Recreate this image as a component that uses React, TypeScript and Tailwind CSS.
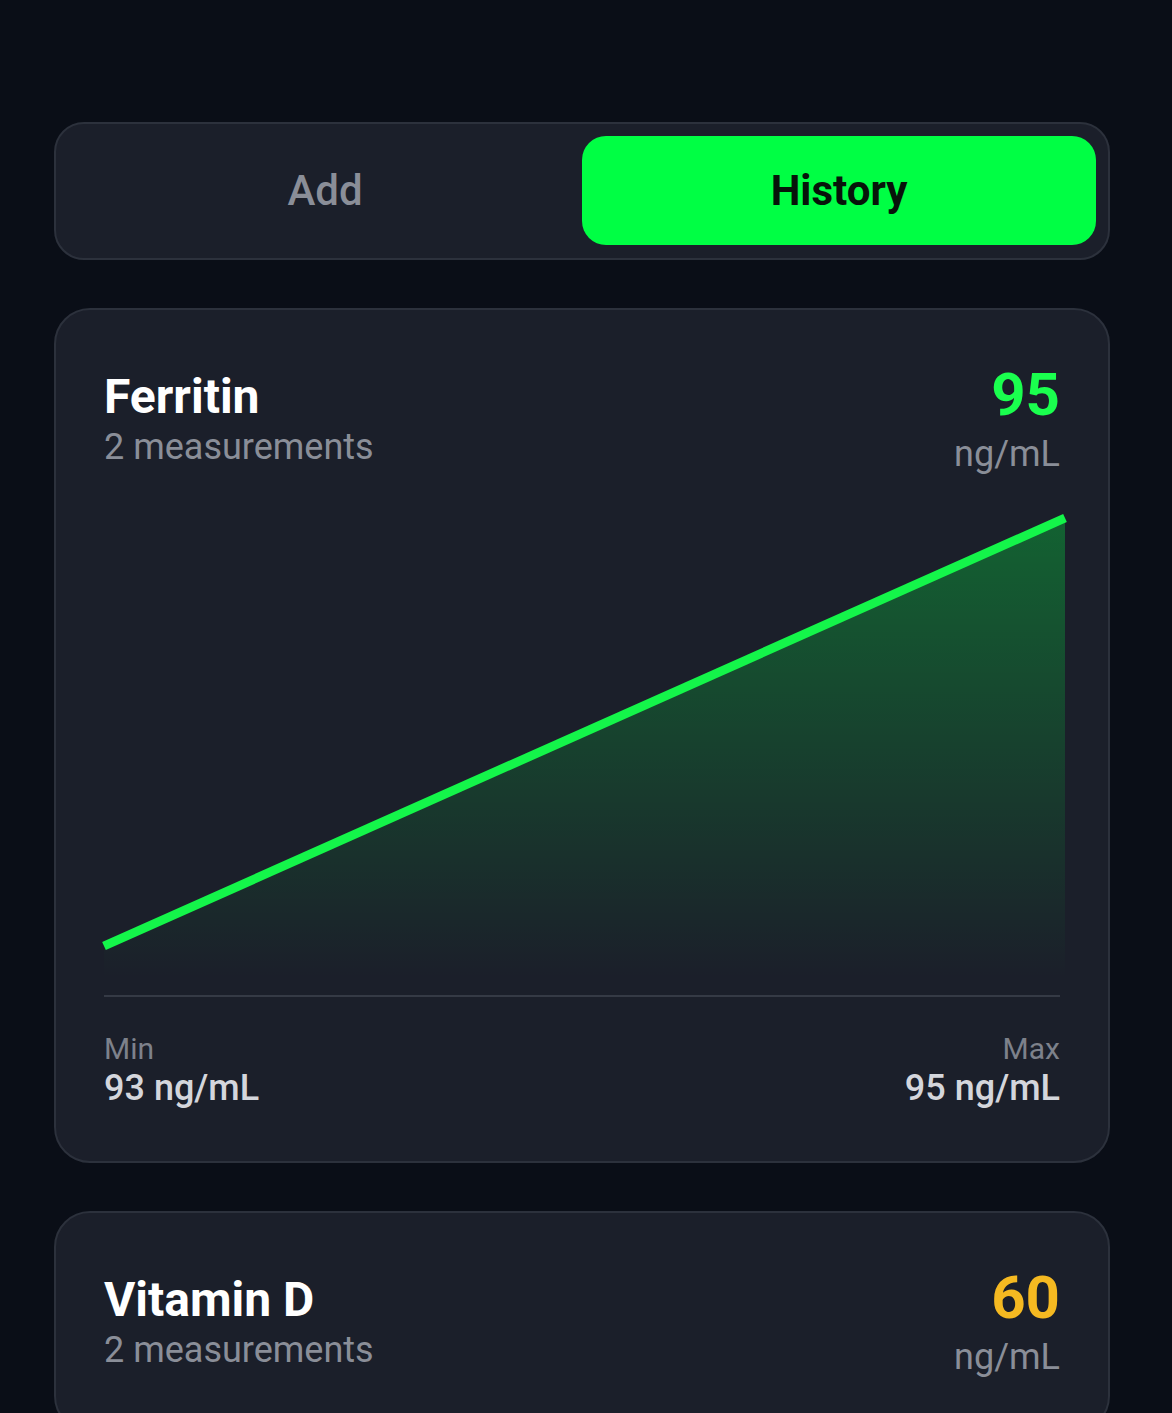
import React from "react"

type Marker = {
  name: string
  count: number
  value: number
  unit: string
  color: string
  min: number
  max: number
}

const markers: Marker[] = [
  { name: "Ferritin", count: 2, value: 95, unit: "ng/mL", color: "text-[#1aff4e]", min: 93, max: 95 },
  { name: "Vitamin D", count: 2, value: 60, unit: "ng/mL", color: "text-[#f5b921]", min: 58, max: 60 },
]

const TrendChart = () => (
  <svg width="962" height="487" viewBox="0 0 962 487" className="block overflow-visible">
    <defs>
      <linearGradient id="fill" x1="0" y1="0" x2="0" y2="1">
        <stop offset="0%" stopColor="#00ff44" stopOpacity="0.3" />
        <stop offset="100%" stopColor="#00ff44" stopOpacity="0" />
      </linearGradient>
    </defs>
    <path d="M0 438 L961 10 L961 470 L0 470 Z" fill="url(#fill)" />
    <path d="M0 438 L961 10" stroke="#14f54a" strokeWidth="9" fill="none" />
  </svg>
)

const MarkerCard = ({ m, chart }: { m: Marker; chart: boolean }) => (
  <div className="rounded-[36px] border-2 border-[#2c313c] bg-[#1b1f2a] px-12 pt-[59px] pb-[51px]">
    <div className="flex items-start justify-between">
      <div>
        <h2 className="text-[48px] font-bold leading-[56px] text-white">{m.name}</h2>
        <p className="text-[36px] leading-[44px] text-[#8a8e98]">{m.count} measurements</p>
      </div>
      <div className="flex flex-col items-end">
        <span className={`text-[60px] font-bold leading-[52px] ${m.color}`}>{m.value}</span>
        <span className="mt-[11px] text-[36px] leading-[44px] text-[#8a8e98]">{m.unit}</span>
      </div>
    </div>
    {chart && (
      <>
        <div className="mt-[32px]">
          <TrendChart />
        </div>
        <div className="h-[2px] bg-[#353a45]" />
        <div className="mt-[35px] flex justify-between">
          <div>
            <p className="text-[30px] leading-[34px] text-[#7d818b]">Min</p>
            <p className="text-[36px] font-medium leading-[44px] text-[#d4d6dc]">
              {m.min} {m.unit}
            </p>
          </div>
          <div className="text-right">
            <p className="text-[30px] leading-[34px] text-[#7d818b]">Max</p>
            <p className="text-[36px] font-medium leading-[44px] text-[#d4d6dc]">
              {m.max} {m.unit}
            </p>
          </div>
        </div>
      </>
    )}
  </div>
)

export default function App() {
  return (
    <div
      className="min-h-[1413px] bg-[#0a0e17] pl-[54px] pr-[62px] pt-[122px]"
      style={{ fontFamily: "Roboto, 'Noto Sans', sans-serif" }}
    >
      <div className="flex rounded-[30px] border-2 border-[#2c313c] bg-[#1b1f2a] px-3 pt-3 pb-[13px]">
        <button className="flex h-[109px] flex-1 items-center justify-center text-[42px] font-medium text-[#8a8e98]">
          Add
        </button>
        <button className="flex h-[109px] flex-1 items-center justify-center rounded-[24px] bg-[#00ff44] text-[42px] font-bold text-[#07140a]">
          History
        </button>
      </div>
      <div className="mt-[48px] flex flex-col gap-[48px]">
        {markers.map((m, i) => (
          <MarkerCard key={m.name} m={m} chart={i === 0} />
        ))}
      </div>
    </div>
  )
}
